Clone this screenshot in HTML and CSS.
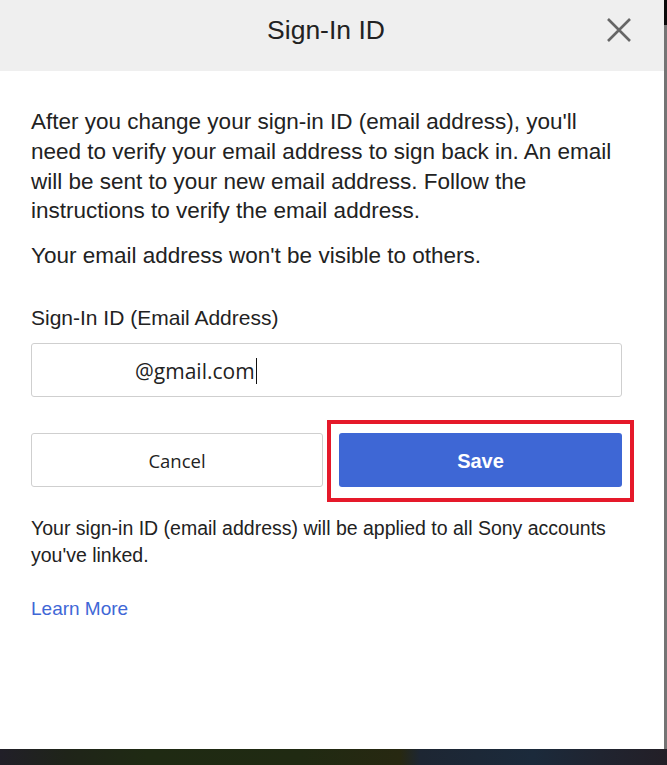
FILE: index.html
```html
<!DOCTYPE html>
<html lang="en">
<head>
<meta charset="utf-8">
<title>Sign-In ID</title>
<link rel="stylesheet" href="styles.css">
</head>
<body>
<div class="screen">
  <div class="dialog">
    <header class="head">
      <span class="spacer"></span>
      <h1 class="title">Sign-In ID</h1>
      <button class="close" type="button" aria-label="Close">
        <svg width="24" height="24" viewBox="0 0 24 24" aria-hidden="true">
          <path d="M1 1 L23 23 M23 1 L1 23" stroke="#666" stroke-width="2.6" fill="none"/>
        </svg>
      </button>
    </header>
    <div class="content">
      <p class="lead">After you change your sign-in ID (email address), you'll need to verify your email address to sign back in. An email will be sent to your new email address. Follow the instructions to verify the email address.</p>
      <p class="lead note">Your email address won't be visible to others.</p>
      <label class="label" for="email">Sign-In ID (Email Address)</label>
      <div class="field" id="email"><span class="value">@gmail.com</span><span class="caret"></span></div>
      <div class="actions">
        <button class="btn cancel" type="button">Cancel</button>
        <div class="save-wrap">
          <button class="btn save" type="button">Save</button>
          <span class="mark"></span>
        </div>
      </div>
      <p class="info">Your sign-in ID (email address) will be applied to all Sony accounts you've linked.</p>
      <a class="link" href="#">Learn More</a>
    </div>
  </div>
  <div class="edge"></div>
</div>
</body>
</html>
```

FILE: styles.css
```css
html, body {
  margin: 0;
  padding: 0;
}

body {
  font-family: "Liberation Sans", Arial, sans-serif;
  color: #222;
}

.screen {
  display: flex;
  align-items: flex-start;
  width: 667px;
  height: 765px;
  background: linear-gradient(90deg, #211f28 0%, #1f2419 10%, #1f2a13 22%, #202a12 45%, #272811 60%, #1d2633 63%, #1b2a3b 80%, #202430 90%, #231f27 100%);
  overflow: hidden;
}

.dialog {
  width: 664px;
  height: 749px;
  background: #fff;
  display: flex;
  flex-direction: column;
}

.edge {
  width: 3px;
  height: 749px;
  background: linear-gradient(#0a0a0a 0 25px, #747474 25px);
}

.head {
  box-sizing: border-box;
  height: 71px;
  background: #efefef;
  display: grid;
  grid-template-columns: 1fr auto 1fr;
  align-items: start;
  padding: 17px 12px 0 0;
}

.title {
  margin: 0;
  font-size: 26.5px;
  line-height: 27px;
  font-weight: normal;
  color: #222;
}

.close {
  justify-self: end;
  margin: 1px 21px 0 0;
  padding: 0;
  border: 0;
  background: none;
  width: 24px;
  height: 24px;
  display: block;
}

.close svg {
  display: block;
}

.content {
  padding: 36.35px 42px 0 31px;
  display: flex;
  flex-direction: column;
  align-items: flex-start;
}

.lead {
  margin: 0;
  font-size: 22.5px;
  line-height: 29.6px;
}

.note {
  margin-top: 15.6px;
}

.label {
  margin-top: 33.25px;
  font-size: 21px;
  line-height: 27px;
}

.field {
  box-sizing: border-box;
  margin-top: 11.8px;
  width: 591px;
  height: 54px;
  border: 1px solid #cfcfcf;
  border-radius: 3px;
  display: flex;
  align-items: center;
  padding: 2px 0 0 103px;
  font-family: "Open Sans", "Noto Sans", sans-serif;
  font-size: 21px;
  color: #222;
}

.caret {
  width: 1px;
  height: 26px;
  background: #111;
  margin-left: 1px;
}

.actions {
  margin-top: 36px;
  width: 591px;
  display: flex;
  gap: 16px;
}

.btn {
  box-sizing: border-box;
  height: 54px;
  border-radius: 3px;
  margin: 0;
  cursor: pointer;
}

.cancel {
  width: 292px;
  background: #fff;
  border: 1px solid #cfcfcf;
  font-family: "Open Sans", "Noto Sans", sans-serif;
  font-size: 18.5px;
  color: #222;
  padding-top: 2px;
}

.save-wrap {
  position: relative;
  flex: 1;
  display: flex;
}

.save {
  flex: 1;
  border: 0;
  background: #3e67d5;
  color: #fff;
  font-family: "Liberation Sans", Arial, sans-serif;
  font-weight: bold;
  font-size: 20px;
  padding-top: 4px;
}

.mark {
  position: absolute;
  top: -13px;
  bottom: -15px;
  left: -12px;
  right: -12px;
  border: 4px solid #e5192a;
  pointer-events: none;
}

.info {
  margin: 27.75px 0 0;
  font-size: 19.5px;
  line-height: 27px;
}

.link {
  margin-top: 26px;
  font-size: 19px;
  line-height: 27px;
  color: #3f67d6;
  text-decoration: none;
}
```
